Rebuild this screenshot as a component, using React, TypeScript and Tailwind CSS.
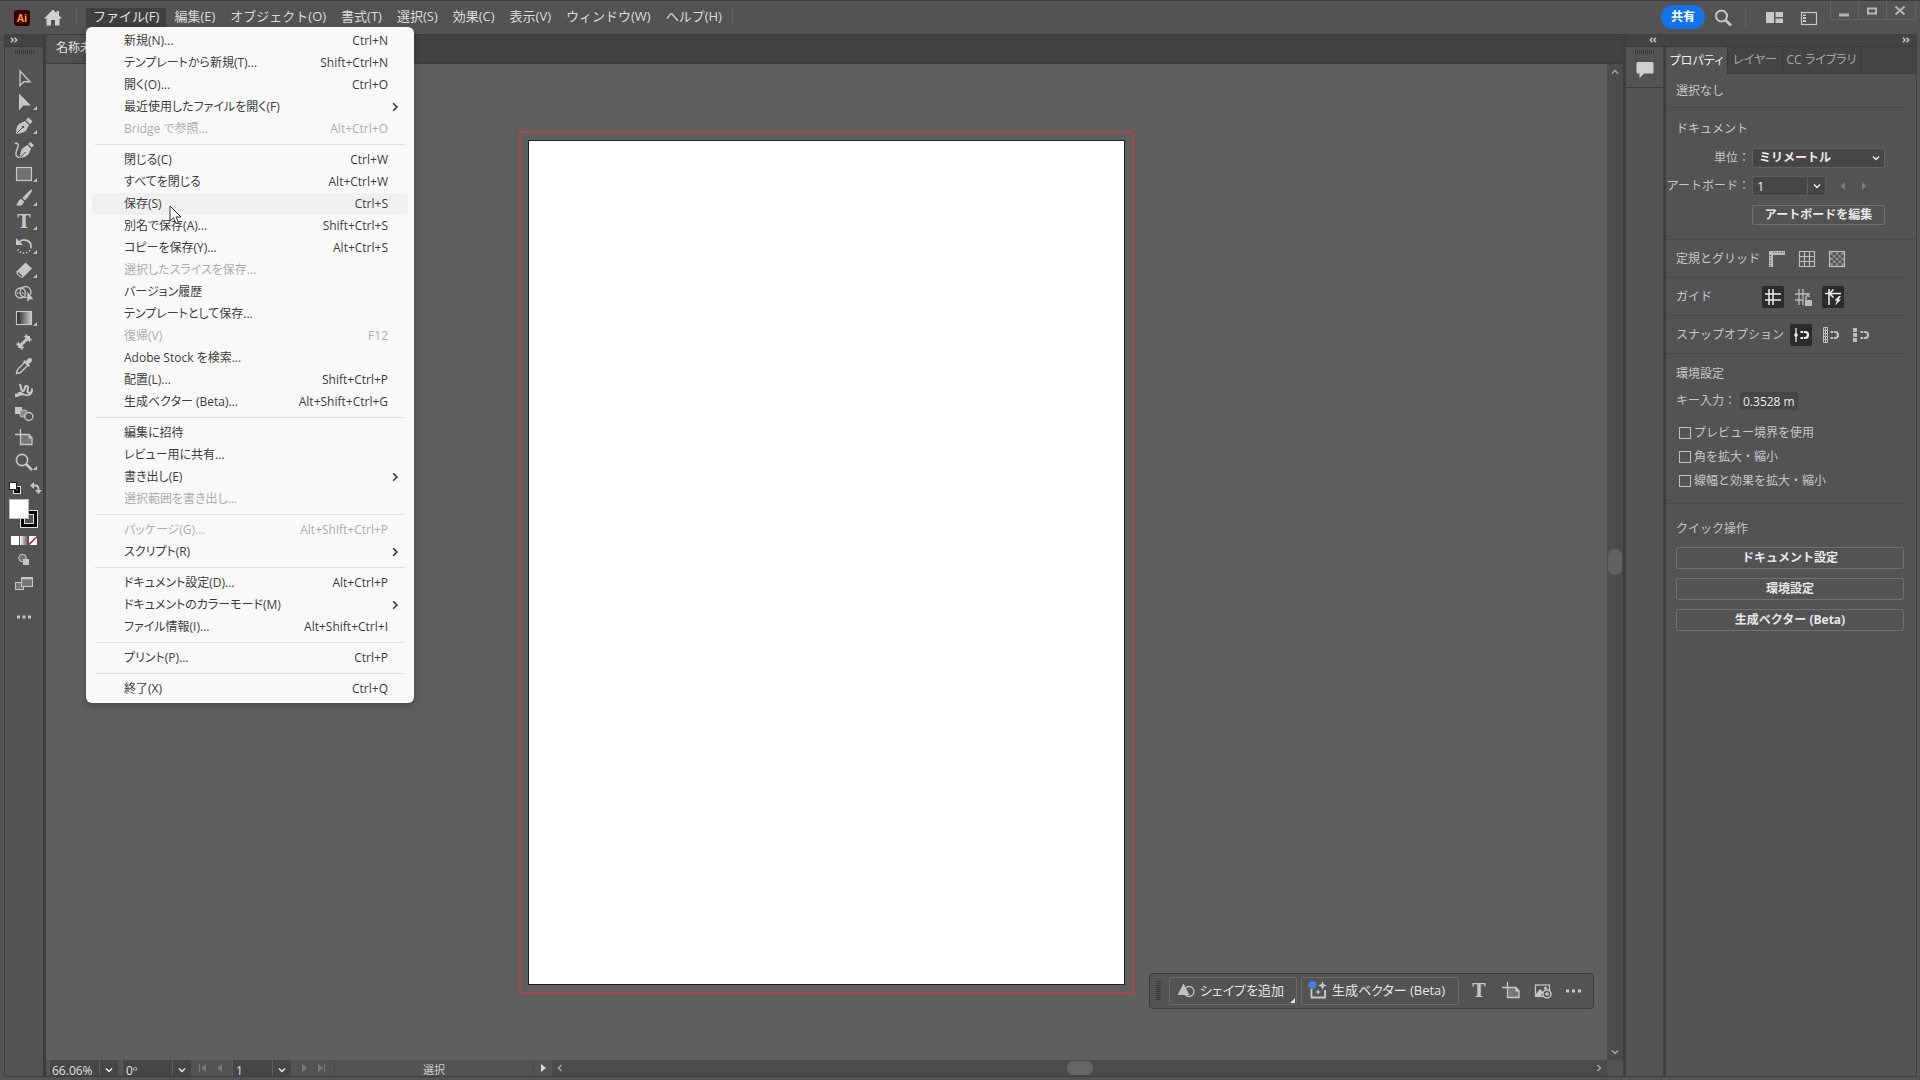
import { ReactNode, useState } from "react";

type MenuEntry = {
  label: string;
  shortcut?: string;
  disabled?: boolean;
  submenu?: boolean;
};

type Tool = {
  name: string;
  icon: ReactNode;
  more?: boolean;
};

const menus = [
  "ファイル(F)",
  "編集(E)",
  "オブジェクト(O)",
  "書式(T)",
  "選択(S)",
  "効果(C)",
  "表示(V)",
  "ウィンドウ(W)",
  "ヘルプ(H)",
];

const fileMenu: MenuEntry[][] = [
  [
    { label: "新規(N)...", shortcut: "Ctrl+N" },
    { label: "テンプレートから新規(T)...", shortcut: "Shift+Ctrl+N" },
    { label: "開く(O)...", shortcut: "Ctrl+O" },
    { label: "最近使用したファイルを開く(F)", submenu: true },
    { label: "Bridge で参照...", shortcut: "Alt+Ctrl+O", disabled: true },
  ],
  [
    { label: "閉じる(C)", shortcut: "Ctrl+W" },
    { label: "すべてを閉じる", shortcut: "Alt+Ctrl+W" },
    { label: "保存(S)", shortcut: "Ctrl+S" },
    { label: "別名で保存(A)...", shortcut: "Shift+Ctrl+S" },
    { label: "コピーを保存(Y)...", shortcut: "Alt+Ctrl+S" },
    { label: "選択したスライスを保存...", disabled: true },
    { label: "バージョン履歴" },
    { label: "テンプレートとして保存..." },
    { label: "復帰(V)", shortcut: "F12", disabled: true },
    { label: "Adobe Stock を検索..." },
    { label: "配置(L)...", shortcut: "Shift+Ctrl+P" },
    { label: "生成ベクター (Beta)...", shortcut: "Alt+Shift+Ctrl+G" },
  ],
  [
    { label: "編集に招待" },
    { label: "レビュー用に共有..." },
    { label: "書き出し(E)", submenu: true },
    { label: "選択範囲を書き出し...", disabled: true },
  ],
  [
    { label: "パッケージ(G)...", shortcut: "Alt+Shift+Ctrl+P", disabled: true },
    { label: "スクリプト(R)", submenu: true },
  ],
  [
    { label: "ドキュメント設定(D)...", shortcut: "Alt+Ctrl+P" },
    { label: "ドキュメントのカラーモード(M)", submenu: true },
    { label: "ファイル情報(I)...", shortcut: "Alt+Shift+Ctrl+I" },
  ],
  [{ label: "プリント(P)...", shortcut: "Ctrl+P" }],
  [{ label: "終了(X)", shortcut: "Ctrl+Q" }],
];

function Icon({ children, className = "size-5" }: { children: ReactNode; className?: string }) {
  return (
    <svg viewBox="0 0 20 20" className={className} fill="none" stroke="currentColor" strokeWidth="1.4" aria-hidden="true">
      {children}
    </svg>
  );
}

function Chevron({ dir, className = "size-2" }: { dir: "down" | "up" | "left" | "right"; className?: string }) {
  const paths = {
    down: "M1 2.5 L4 5.5 L7 2.5",
    up: "M1 5.5 L4 2.5 L7 5.5",
    left: "M5.5 1 L2.5 4 L5.5 7",
    right: "M2.5 1 L5.5 4 L2.5 7",
  };
  return (
    <svg viewBox="0 0 8 8" className={className} fill="none" stroke="currentColor" strokeWidth="1.4" aria-hidden="true">
      <path d={paths[dir]} />
    </svg>
  );
}

function DoubleChevron({ dir }: { dir: "left" | "right" }) {
  return (
    <svg viewBox="0 0 8 6" className="h-[6px] w-2 text-[#d0d0d0]" fill="none" stroke="currentColor" strokeWidth="1.3" aria-hidden="true">
      {dir === "right" ? (
        <path d="M1 .7 L3.2 3 L1 5.3 M4.6 .7 L6.8 3 L4.6 5.3" />
      ) : (
        <path d="M7 .7 L4.8 3 L7 5.3 M3.4 .7 L1.2 3 L3.4 5.3" />
      )}
    </svg>
  );
}

function Grip({ className }: { className: string }) {
  return <div className={`bg-[repeating-linear-gradient(90deg,#3a3a3a_0_1px,transparent_1px_2px)] ${className}`} />;
}

const artboardIcon = (
  <Icon>
    <path d="M7 7 H15 L18 10 V16.5 H7 Z" fill="#777" stroke="none" />
    <path d="M6.5 1 V16.5 H18 V10 L15 6.5 H1" strokeWidth="1.3" />
    <path d="M14.5 6.5 V10.5 H18.5 Z" fill="currentColor" stroke="none" />
  </Icon>
);

const typeIcon = <span className="font-['DejaVu_Serif',serif] text-lg leading-5 font-bold">T</span>;

const tools: Tool[] = [
  { name: "選択ツール", icon: <Icon><path d="M6 3 V17.5 L9.6 13.8 H16 Z" /></Icon> },
  {
    name: "ダイレクト選択ツール",
    more: true,
    icon: <Icon><path d="M5 1.5 V18.5 L9.3 13.6 H17 Z" fill="currentColor" stroke="none" /></Icon>,
  },
  {
    name: "ペンツール",
    more: true,
    icon: (
      <Icon>
        <path d="M2 18 C2 13 3 9.5 5 8 L11 5 L15 9 L12.5 14 C11 16 7 17.5 2 18 Z" fill="currentColor" stroke="none" />
        <path d="M11.8 4 L14.5 1.5 L18.5 5.5 L16 8.2 Z" fill="currentColor" stroke="none" />
        <path d="M2.5 17.5 L8.5 11.5" stroke="#535353" strokeWidth="1" />
        <circle cx="9" cy="11" r="1.2" fill="#535353" stroke="none" />
      </Icon>
    ),
  },
  {
    name: "曲線ツール",
    icon: (
      <Icon>
        <path d="M6 18 C6 13 7 9.5 9 8 L13.5 5 L17 8.5 L15 13.5 C13.5 16 10 17.5 6 18 Z" fill="currentColor" stroke="none" />
        <path d="M14.2 4 L16.5 2 L20 5.2 L17.8 7.6 Z" fill="currentColor" stroke="none" />
        <path d="M6.5 17.5 L11.5 12" stroke="#535353" strokeWidth="1" />
        <path d="M.8 3.5 C4.5 2.5 4.8 5 3.5 8 C1.5 12.5 .5 17 6 17.5" strokeWidth="1.5" />
      </Icon>
    ),
  },
  {
    name: "長方形ツール",
    more: true,
    icon: <Icon><rect x="2.5" y="3.5" width="15" height="13" fill="#707070" strokeWidth="1.2" /></Icon>,
  },
  {
    name: "ブラシツール",
    more: true,
    icon: (
      <Icon>
        <path d="M18 1.5 C19 2.5 14 9.5 10.8 12.5 L8.3 10 C11.5 6.5 17 .8 18 1.5 Z" fill="currentColor" stroke="none" />
        <path d="M7.5 11 L10 13.5 C9.5 17.5 5.5 18.5 2 17 C4.5 16 3.5 11.5 7.5 11 Z" fill="currentColor" stroke="none" />
      </Icon>
    ),
  },
  { name: "文字ツール", more: true, icon: typeIcon },
  {
    name: "回転ツール",
    more: true,
    icon: (
      <Icon>
        <path d="M5 6.5 C9 1.5 17.5 4.5 17 11" strokeWidth="1.8" />
        <path d="M17 11 C16.5 19 4 19 3.5 11.5" strokeDasharray="1.5 1.8" />
        <path d="M2 2 V9 H9 Z" fill="currentColor" stroke="none" />
      </Icon>
    ),
  },
  {
    name: "消しゴムツール",
    more: true,
    icon: (
      <Icon>
        <path d="M2.5 11.5 L11.5 2.5 L18 8.5 L9 17.5 H6.5 L2.5 13.8 Z" fill="currentColor" stroke="none" />
        <path d="M4.2 11.8 L8.8 16.2 L6.8 16.4 L3.8 13.6 Z" fill="#535353" stroke="none" />
      </Icon>
    ),
  },
  {
    name: "シェイプ形成ツール",
    icon: (
      <Icon>
        <circle cx="6.5" cy="9" r="5" strokeWidth="1.3" />
        <circle cx="11.5" cy="8" r="5.5" strokeWidth="1.3" />
        <path d="M3 9 H13" strokeDasharray="1.3 1.3" />
        <path d="M13 7 V18.5 L15.6 15.6 H20 Z" fill="currentColor" stroke="#535353" strokeWidth=".5" />
      </Icon>
    ),
  },
  {
    name: "グラデーションツール",
    more: true,
    icon: (
      <Icon>
        <defs>
          <linearGradient id="tool-gradient">
            <stop offset="0" stopColor="#222" />
            <stop offset="1" stopColor="#ccc" />
          </linearGradient>
        </defs>
        <rect x="2.5" y="3.5" width="15" height="13" fill="url(#tool-gradient)" strokeWidth="1.2" />
      </Icon>
    ),
  },
  {
    name: "ものさしツール",
    icon: (
      <Icon>
        <path d="M2.5 11.5 L8.5 17.5 M11.5 2.5 L17.5 8.5" strokeWidth="1.5" />
        <path d="M6 14 L14 6" strokeWidth="3" />
        <path d="M4 16 V9.5 L10.5 16 Z M16 4 V10.5 L9.5 4 Z" fill="currentColor" stroke="none" />
      </Icon>
    ),
  },
  {
    name: "スポイトツール",
    icon: (
      <Icon>
        <path d="M10.5 6.5 L3.5 13.5 L2.5 17.5 L6.5 16.5 L13.5 9.5" strokeWidth="1.4" />
        <path d="M9 5.5 L10.5 4 L12 5.5 C13 3 15.5 1 17.5 2.5 C19 4.5 17 7 14.5 8 L16 9.5 L14.5 11 Z" fill="currentColor" stroke="none" />
      </Icon>
    ),
  },
  {
    name: "パペットワープツール",
    icon: (
      <Icon>
        <path d="M5 4.5 C9 5.5 5 9.5 8.5 11 C11.5 12 9.5 5 13 6 C16 7.5 11 11.5 15 13 C17 13.5 18 11 18 8.5" strokeWidth="2" />
        <path d="M3 14.5 C5 9.5 8 12.5 11 14 C14 15.5 17 13.5 19 9.5 C19 15 15 17 11 15.8 C8 15 6 16 5 16 Z" fill="currentColor" stroke="none" />
        <rect x="1" y="13.5" width="3.5" height="3.5" fill="currentColor" stroke="none" />
      </Icon>
    ),
  },
  {
    name: "ブレンドツール",
    icon: (
      <Icon>
        <rect x="1" y="3" width="7" height="7" fill="currentColor" stroke="none" />
        <rect x="6" y="6" width="7" height="7" rx="2" fill="#8a8a8a" strokeWidth=".8" />
        <circle cx="14.8" cy="12.5" r="4" fill="#535353" />
      </Icon>
    ),
  },
  { name: "アートボードツール", icon: artboardIcon },
  {
    name: "ズームツール",
    more: true,
    icon: (
      <Icon>
        <circle cx="8" cy="8" r="5.6" strokeWidth="1.6" />
        <path d="M12 12 L18 18" strokeWidth="2.6" />
      </Icon>
    ),
  },
];

function FileMenu() {
  return (
    <div
      role="menu"
      className="absolute top-[26px] left-0 z-20 w-[328px] rounded-md bg-[#f9f9f9] py-[3px] font-['Open_Sans','Noto_Sans_CJK_JP',sans-serif] text-xs text-[#3c3c3c] shadow-[0_4px_8px_rgba(0,0,0,0.2)] [font-feature-settings:'palt']"
    >
      {fileMenu.map((group, i) => (
        <div key={i}>
          {i > 0 && <hr className="mx-[9px] my-1 border-[#dedede]" />}
          {group.map((entry) => (
            <button
              key={entry.label}
              role="menuitem"
              disabled={entry.disabled}
              className={`mx-[6px] flex h-[22px] w-[316px] items-center rounded-sm pl-8 text-left disabled:text-[#adadad] ${
                entry.label === "保存(S)" ? "bg-[#f0f0f0]" : ""
              }`}
            >
              <span className="flex-1">{entry.label}</span>
              {entry.shortcut && <span className="pr-5">{entry.shortcut}</span>}
              {entry.submenu && <Chevron dir="right" className="mr-2 size-[10px]" />}
            </button>
          ))}
        </div>
      ))}
      <svg viewBox="0 0 14 20" className="absolute top-[178px] left-[83px] h-5 w-[14px]" aria-hidden="true">
        <path d="M1 1 V16 L4.5 12.8 L7 18.5 L9.5 17.5 L7 12 H12 Z" fill="#fff" stroke="#333" strokeWidth="1" />
      </svg>
    </div>
  );
}

function TopBar() {
  return (
    <header className="flex h-[33px] shrink-0 items-start">
      <div className="mt-[9px] ml-[14px] flex size-4 items-center justify-center rounded-[3px] bg-[#300] font-['Open_Sans',sans-serif] text-[10px] leading-none font-bold text-[#ff9a3c]">
        Ai
      </div>
      <button aria-label="ホーム" className="mt-[7px] ml-[13px] text-[#d0d0d0]">
        <Icon>
          <path d="M10 1.5 L1 10.5 H3.5 V17.5 H8 V12 H12 V17.5 H16.5 V10.5 H19 L16 7.5 V3 H13.5 V5 Z" fill="currentColor" stroke="none" />
        </Icon>
      </button>
      <div className="mt-[7px] ml-[13px] h-[18px] w-px bg-[#626262]" />
      <nav className="relative ml-[9px] flex gap-px">
        {menus.map((menu, i) => (
          <button
            key={menu}
            className={`mt-[7px] h-[19px] px-[7px] pb-1 text-[13px] leading-4 whitespace-nowrap ${
              i === 0 ? "bg-[#3f3f3f] text-[#e6e6e6]" : "text-[#dcdcdc]"
            }`}
          >
            {menu}
          </button>
        ))}
        <FileMenu />
      </nav>
      <div className="mt-[7px] ml-[3px] h-[18px] w-px bg-[#626262]" />
      <button className="mt-1 ml-auto h-6 w-11 rounded-full bg-[#1473e6] text-xs font-bold text-white">共有</button>
      <button aria-label="検索" className="mt-[7px] ml-2 text-[#c8c8c8]">
        <Icon>
          <circle cx="8.5" cy="8" r="5.5" strokeWidth="2" />
          <path d="M12.5 12 L18 17.5" strokeWidth="2.6" />
        </Icon>
      </button>
      <div className="mt-[7px] ml-3 h-5 w-px bg-[#626262]" />
      <button aria-label="ドキュメントの配置" className="mt-[7px] ml-[19px] text-[#c8c8c8]">
        <Icon>
          <path d="M1 4 H9 V15 H1 Z M10.5 4 H18 V9 H10.5 Z M10.5 10.5 H18 V15 H10.5 Z" fill="currentColor" stroke="none" />
        </Icon>
      </button>
      <button aria-label="ワークスペースの切り替え" className="mt-[7px] ml-[15px] text-[#c8c8c8]">
        <Icon>
          <rect x="1.5" y="4.5" width="15" height="12" strokeWidth="1.2" />
          <path d="M3 6.5 H6 V8 H3 Z M3 9 H6 V11 H3 Z M3 12 H6 V14 H3 Z" fill="currentColor" stroke="none" />
        </Icon>
      </button>
      <div className="mr-1 ml-[10px] flex h-[19px] divide-x divide-[#646464] border-x border-b border-[#646464] text-[#b4b4b4]">
        <button aria-label="最小化" className="w-7 pt-px pl-1">
          <Icon><path d="M4 13 H14" strokeWidth="3" /></Icon>
        </button>
        <button aria-label="最大化" className="w-7 pl-1">
          <Icon><rect x="5" y="7.5" width="8" height="5" strokeWidth="2" /></Icon>
        </button>
        <button aria-label="閉じる" className="w-7 pl-1">
          <Icon><path d="M4.5 5.5 L13.5 13.5 M13.5 5.5 L4.5 13.5" strokeWidth="2" /></Icon>
        </button>
      </div>
    </header>
  );
}

function Toolbar() {
  return (
    <aside className="flex w-[42px] shrink-0 flex-col items-center border-r-3 border-b border-l border-[#3e3e3e] text-[#c6c6c6]">
      <div className="flex h-[13px] w-full items-center border-b border-[#3a3a3a] bg-[#434343] pl-[5px]">
        <DoubleChevron dir="right" />
      </div>
      <Grip className="mt-[3px] mb-3 h-1 w-[19px]" />
      {tools.map((tool) => (
        <button key={tool.name} aria-label={tool.name} className="relative flex h-6 w-full items-center justify-center">
          {tool.icon}
          {tool.more && (
            <svg viewBox="0 0 4 4" className="absolute right-[6px] bottom-1 size-1" aria-hidden="true">
              <path d="M4 0 V4 H0 Z" fill="currentColor" />
            </svg>
          )}
        </button>
      ))}
      <div className="mt-2 flex w-full gap-[9px] pl-1">
        <button aria-label="初期設定の塗りと線">
          <svg viewBox="0 0 12 12" className="size-3" aria-hidden="true">
            <rect x="4.5" y="4.5" width="7" height="7" fill="none" stroke="#e0e0e0" />
            <rect x="6" y="6" width="4" height="4" fill="#535353" stroke="#000" strokeWidth="2" />
            <rect x=".5" y=".5" width="7" height="7" fill="#fff" stroke="#222" />
          </svg>
        </button>
        <button aria-label="塗りと線を入れ替え">
          <svg viewBox="0 0 12 12" className="size-3" fill="none" stroke="currentColor" aria-hidden="true">
            <path d="M3 3.5 H5.5 Q8.5 3.5 8.5 8" strokeWidth="1.8" />
            <path d="M0 3.5 L4 0 V7 Z M8.5 12 L5 8 H12 Z" fill="currentColor" stroke="none" />
          </svg>
        </button>
      </div>
      <div className="mt-[5px] w-full pl-1">
        <svg viewBox="0 0 30 30" className="size-[30px]" aria-hidden="true">
          <rect x="11.5" y="11.5" width="17" height="17" fill="#000" stroke="#e0e0e0" />
          <rect x="15.5" y="15.5" width="9" height="9" fill="#535353" stroke="#e0e0e0" />
          <rect x=".5" y=".5" width="19" height="19" fill="#fff" stroke="#bbb" />
        </svg>
      </div>
      <div className="mt-[7px] flex w-full gap-px pl-[6px]">
        <button aria-label="カラー" className="h-[9px] w-2 bg-white" />
        <button aria-label="グラデーション" className="h-[9px] w-2 bg-linear-to-r from-white to-[#555]" />
        <button aria-label="なし" className="h-[9px] w-2 bg-[linear-gradient(135deg,#fff_42%,#c22_42%_58%,#fff_58%)]" />
      </div>
      <button aria-label="描画方法" className="mt-[5px]">
        <Icon>
          <circle cx="8.5" cy="8" r="3.8" fill="#777" strokeWidth="1" />
          <rect x="9" y="9" width="6" height="6" fill="currentColor" stroke="none" />
        </Icon>
      </button>
      <button aria-label="スクリーンモード" className="mt-1">
        <Icon>
          <rect x="1.5" y="8.5" width="8" height="7" fill="#777" strokeWidth="1" />
          <rect x="7.5" y="3.5" width="11" height="9" fill="#777" strokeWidth="1" />
          <path d="M7.5 4.5 H18.5" strokeWidth="1.6" />
        </Icon>
      </button>
      <button aria-label="ツールバーを編集" className="mt-[13px]">
        <Icon>
          <path d="M3 10 H6 M8.5 10 H11.5 M14 10 H17" strokeWidth="3" />
        </Icon>
      </button>
    </aside>
  );
}

function ContextBar() {
  return (
    <div className="absolute right-[13px] bottom-[51px] flex h-9 items-center rounded-sm border border-[#3c3c3c] bg-[#535353] pr-2 pl-[6px] text-[13px] text-[#e4e4e4] [font-feature-settings:'palt']">
      <div className="mr-2 h-5 w-[5px] bg-[repeating-linear-gradient(180deg,#3a3a3a_0_1px,transparent_1px_2px)]" />
      <button className="relative mr-1 flex h-7 w-32 items-center rounded-xs border border-[#6c6c6c] pl-[6px] whitespace-nowrap">
        <Icon className="mr-1 size-5 text-[#c0c0c0]">
          <circle cx="13" cy="10.5" r="5" strokeWidth="1.3" />
          <path d="M7.5 2.5 L13.5 14 H1.5 Z" fill="currentColor" stroke="none" />
        </Icon>
        シェイプを追加
        <svg viewBox="0 0 5 5" className="absolute right-px bottom-px size-[5px]" aria-hidden="true">
          <path d="M5 0 V5 H0 Z" fill="currentColor" />
        </svg>
      </button>
      <button className="mr-[10px] flex h-7 w-[158px] items-center rounded-xs border border-[#6c6c6c] pl-[6px] whitespace-nowrap">
        <Icon className="mr-1 size-5 text-[#c8c8c8]">
          <path d="M3.5 8 V16.5 H17 V9" strokeWidth="1.8" />
          <path d="M14.5 0 L15.7 3.3 L19 4.5 L15.7 5.7 L14.5 9 L13.3 5.7 L10 4.5 L13.3 3.3 Z" fill="currentColor" stroke="none" />
          <path d="M10 8 L10.8 10.2 L13 11 L10.8 11.8 L10 14 L9.2 11.8 L7 11 L9.2 10.2 Z" fill="currentColor" stroke="none" />
          <circle cx="4.5" cy="4" r="4" fill="#3b82d8" stroke="none" />
        </Icon>
        生成ベクター (Beta)
      </button>
      <div className="flex gap-3 text-[#c8c8c8]">
        <button aria-label="文字" className="flex w-5 justify-center">{typeIcon}</button>
        <button aria-label="アートボード">{artboardIcon}</button>
        <button aria-label="画像を配置">
          <Icon>
            <rect x="2.5" y="4" width="14" height="11.5" strokeWidth="1.2" />
            <path d="M3 13 L7 8 L10 11 L8 15 H3 Z" fill="currentColor" stroke="none" />
            <circle cx="12.5" cy="7" r="1.5" fill="currentColor" stroke="none" />
            <circle cx="14" cy="13" r="4" fill="#535353" strokeWidth="1.5" />
            <path d="M14 11 V15 M12 13 H16" />
          </Icon>
        </button>
        <button aria-label="その他">
          <Icon><path d="M1 10 H4 M7 10 H10 M13 10 H16" strokeWidth="3" /></Icon>
        </button>
      </div>
    </div>
  );
}

function StatusBar() {
  const field = "h-4 shrink-0 bg-[#464646] border-x border-[#5c5c5c] pt-[6px] text-xs leading-4 text-[#e0e0e0] font-['Open_Sans',sans-serif] outline-none";
  const drop = "flex h-4 w-[18px] shrink-0 items-center justify-center bg-[#464646] pt-1 text-[#f0f0f0]";
  return (
    <footer className="flex h-4 shrink-0 items-center overflow-hidden bg-[#535353] pl-[3px]">
      <input aria-label="ズーム" defaultValue="66.06%" className={`${field} w-[51px] px-[2px]`} />
      <button aria-label="ズームの一覧" className={drop}><Chevron dir="down" /></button>
      <input aria-label="回転" defaultValue="0º" className={`${field} ml-1 w-[51px] px-[3px]`} />
      <button aria-label="回転の一覧" className={drop}><Chevron dir="down" /></button>
      <div className="flex w-[41px] justify-around px-1 text-[#7a7a7a]">
        <button aria-label="最初"><svg viewBox="0 0 8 8" className="size-2"><path d="M0 0 H1 V8 H0 Z M7 0 V8 L2 4 Z" fill="currentColor" /></svg></button>
        <button aria-label="前へ"><svg viewBox="0 0 8 8" className="size-2"><path d="M6 0 V8 L1 4 Z" fill="currentColor" /></svg></button>
      </div>
      <input aria-label="アートボードの番号" defaultValue="1" className={`${field} w-[41px] px-[3px]`} />
      <button aria-label="アートボードの一覧" className={drop}><Chevron dir="down" /></button>
      <div className="flex w-[43px] justify-around px-1 text-[#7a7a7a]">
        <button aria-label="次へ"><svg viewBox="0 0 8 8" className="size-2"><path d="M2 0 V8 L7 4 Z" fill="currentColor" /></svg></button>
        <button aria-label="最後"><svg viewBox="0 0 8 8" className="size-2"><path d="M7 0 H8 V8 H7 Z M1 0 V8 L6 4 Z" fill="currentColor" /></svg></button>
      </div>
      <div className="h-4 w-[200px] border-x border-[#484848] pt-[2px] text-center text-[11px] leading-4 text-[#d0d0d0]">選択</div>
      <button aria-label="ステータスの表示" className="flex w-[18px] justify-center text-[#d8d8d8]">
        <svg viewBox="0 0 8 10" className="h-[10px] w-2"><path d="M2 1 V9 L7 5 Z" fill="currentColor" /></svg>
      </button>
      <div className="flex h-4 flex-1 items-center bg-[#4b4b4b] px-1 text-[#a8a8a8]">
        <Chevron dir="left" />
        <div className="flex flex-1 justify-center">
          <div className="h-[14px] w-[26px] rounded-full bg-[#666]" />
        </div>
        <Chevron dir="right" />
      </div>
      <div className="w-4" />
    </footer>
  );
}

function DocumentArea() {
  return (
    <main className="flex min-w-0 flex-1 flex-col border-b border-[#3c3c3c]">
      <div className="flex h-[30px] shrink-0 border-y border-[#3a3a3a] bg-[#424242]">
        <div className="w-[350px] bg-[#505050] pl-[10px] text-xs leading-[26px] text-[#e6e6e6]">名称未設定-1</div>
      </div>
      <div className="flex min-h-0 flex-1">
        <div className="relative flex flex-1 items-center justify-center bg-[#5f5f5f]">
          <div className="border-2 border-[#a34a4a] p-[7px]">
            <div className="h-[845px] w-[597px] border border-[#222] bg-white" />
          </div>
          <ContextBar />
        </div>
        <div className="flex w-4 flex-col items-center justify-between bg-[#4b4b4b] py-1 text-[#a8a8a8]">
          <Chevron dir="up" />
          <div className="h-[26px] w-[14px] rounded-full bg-[#626262]" />
          <Chevron dir="down" />
        </div>
      </div>
      <StatusBar />
    </main>
  );
}

function PanelButton({ children, className }: { children: ReactNode; className: string }) {
  return (
    <button className={`rounded-xs border border-[#707070] text-xs font-bold text-[#e8e8e8] ${className}`}>
      {children}
    </button>
  );
}

function IconToggle({ name, active, children }: { name: string; active?: boolean; children: ReactNode }) {
  return (
    <button
      aria-label={name}
      className={`flex size-[22px] items-center justify-center rounded-xs ${active ? "bg-[#2b2b2b] text-[#f0f0f0]" : "text-[#bdbdbd]"}`}
    >
      {children}
    </button>
  );
}

const magnet = <path d="M9.5 7 H14 A3 3 0 0 1 14 13 H9.5" strokeWidth="2.2" strokeDasharray="2.5 .8 11.5 .8 4" />;

function PropertiesPanel() {
  const [checks, setChecks] = useState([false, false, false]);
  const labels = ["プレビュー境界を使用", "角を拡大・縮小", "線幅と効果を拡大・縮小"];

  return (
    <section className="flex w-[250px] flex-col text-xs text-[#c6c6c6]">
      <div className="flex h-[27px] border-b border-[#3c3c3c] bg-[#444] [font-feature-settings:'palt']">
        <button className="-mb-px w-[61px] bg-[#535353] text-[#f0f0f0]">プロパティ</button>
        <button className="w-[56px] border-x border-[#3a3a3a] text-[#a8a8a8]">レイヤー</button>
        <button className="w-[78px] border-r border-[#3a3a3a] text-[#a8a8a8]">CC ライブラリ</button>
      </div>

      <h2 className="mr-3 h-[34px] border-b border-[#494949] pl-[10px] leading-[34px]">選択なし</h2>

      <div className="border-b border-[#494949] pb-[14px]">
        <h3 className="mt-3 mb-[10px] pl-[10px] leading-[18px]">ドキュメント</h3>
        <div className="flex h-5 items-center">
          <label htmlFor="unit" className="w-[86px] pr-[2px] text-right">単位：</label>
          <div className="relative">
            <select id="unit" className="h-5 w-[133px] appearance-none rounded-xs border border-[#626262] bg-[#464646] pl-[6px] font-bold text-[#ececec]">
              <option>ミリメートル</option>
            </select>
            <Chevron dir="down" className="pointer-events-none absolute top-[6px] right-[5px] size-2 text-[#f0f0f0]" />
          </div>
        </div>
        <div className="mt-2 flex h-5 items-center">
          <label htmlFor="artboard" className="w-[86px] pr-[2px] text-right whitespace-nowrap">アートボード：</label>
          <input id="artboard" defaultValue="1" className="h-5 w-14 rounded-l-xs border border-[#5e5e5e] bg-[#464646] pl-1 text-[13px] text-[#ececec]" />
          <button aria-label="アートボードを選択" className="flex h-5 w-[18px] items-center justify-center rounded-r-xs border border-l-0 border-[#5e5e5e] bg-[#464646] text-[#f0f0f0]">
            <Chevron dir="down" />
          </button>
          <button aria-label="前のアートボード" className="ml-[13px] text-[#7a7a7a]">
            <svg viewBox="0 0 8 8" className="size-2"><path d="M6 0 V8 L1.5 4 Z" fill="currentColor" /></svg>
          </button>
          <button aria-label="次のアートボード" className="ml-[13px] text-[#7a7a7a]">
            <svg viewBox="0 0 8 8" className="size-2"><path d="M2 0 V8 L6.5 4 Z" fill="currentColor" /></svg>
          </button>
        </div>
        <PanelButton className="mt-[9px] ml-[86px] h-5 w-[133px] leading-4">アートボードを編集</PanelButton>
      </div>

      <div className="mr-3 flex h-[38px] items-center border-b border-[#494949] pl-[10px]">
        <span className="w-[90px]">定規とグリッド</span>
        <div className="flex gap-2">
          <IconToggle name="定規">
            <Icon>
              <path d="M2 2 H18 V6 H6 V18 H2 Z" fill="currentColor" stroke="none" />
              <path d="M6 3.5 H18 M3.5 6 V18" stroke="#535353" strokeDasharray="1 1.5" strokeWidth="1.2" />
            </Icon>
          </IconToggle>
          <IconToggle name="グリッド">
            <Icon><path d="M2.5 2.5 H17.5 V17.5 H2.5 Z M7.5 2.5 V17.5 M12.5 2.5 V17.5 M2.5 7.5 H17.5 M2.5 12.5 H17.5" strokeWidth="1.2" /></Icon>
          </IconToggle>
          <IconToggle name="透明グリッド">
            <Icon>
              <rect x="2.5" y="2.5" width="15" height="15" strokeWidth="1.2" />
              <path d="M3 4.5 H17 M3 10 H17 M3 15.5 H17" strokeDasharray="2.8 2.8" strokeWidth="2.6" opacity=".6" />
              <path d="M5.8 7.25 H17 M5.8 12.75 H17" strokeDasharray="2.8 2.8" strokeWidth="2.6" opacity=".6" />
            </Icon>
          </IconToggle>
        </div>
      </div>

      <div className="mr-3 flex h-[38px] items-center border-b border-[#494949] pl-[10px]">
        <span className="w-[86px]">ガイド</span>
        <div className="flex gap-2">
          <IconToggle name="ガイドを表示" active>
            <Icon><path d="M6 2 V18 M10 2 V18 M2 7 H18 M2 13 H18" strokeWidth="1.5" /></Icon>
          </IconToggle>
          <IconToggle name="ガイドをロック">
            <Icon>
              <path d="M6 2 V18 M10 2 V18 M2 7 H17 M2 13 H10" strokeWidth="1.3" />
              <rect x="12" y="13" width="7" height="6" fill="currentColor" stroke="none" />
              <path d="M13 13 V11 A1.8 1.8 0 0 1 16.5 10" />
            </Icon>
          </IconToggle>
          <IconToggle name="スマートガイド" active>
            <Icon>
              <path d="M6 2 V18 M2 6.5 H18 M10.5 2.5 L6.5 6.5 L10.5 10.5" strokeWidth="1.5" />
              <path d="M16 9 L11.5 13.5 H14 L12 18.5 L18 12.5 H15.5 L18 9 Z" fill="currentColor" stroke="none" />
            </Icon>
          </IconToggle>
        </div>
      </div>

      <div className="mr-3 flex h-[38px] items-center border-b border-[#494949] pl-[10px]">
        <span className="w-[114px]">スナップオプション</span>
        <div className="flex gap-2">
          <IconToggle name="ポイントにスナップ" active>
            <Icon>
              <path d="M5 3 V17" strokeWidth="1.3" />
              <circle cx="5" cy="10" r="1.8" fill="currentColor" stroke="none" />
              {magnet}
            </Icon>
          </IconToggle>
          <IconToggle name="グリッドにスナップ">
            <Icon>
              <path d="M2.5 2.5 H6.5 V17.5 H2.5 Z M4.5 2.5 V17.5 M2.5 5.5 H6.5 M2.5 8.5 H6.5 M2.5 11.5 H6.5 M2.5 14.5 H6.5" strokeWidth="1" />
              {magnet}
            </Icon>
          </IconToggle>
          <IconToggle name="ピクセルにスナップ">
            <Icon>
              <path d="M2 3 H6 V7 H2 Z M2 8 H6 V12 H2 Z M2 13 H6 V17 H2 Z" fill="currentColor" stroke="none" />
              {magnet}
            </Icon>
          </IconToggle>
        </div>
      </div>

      <div className="mr-3 border-b border-[#494949] pb-[10px] pl-[10px]">
        <h3 className="mt-[11px] mb-2 leading-[18px]">環境設定</h3>
        <div className="flex h-5 items-center">
          <label htmlFor="key-input" className="w-16 leading-5">キー入力：</label>
          <input id="key-input" defaultValue="0.3528 mm" className="h-[18px] w-[58px] rounded-xs border-x-3 border-[#464646] bg-[#464646] font-['Open_Sans',sans-serif] text-xs text-[#ececec]" />
        </div>
        <div className="mt-[10px]">
          {labels.map((label, i) => (
            <label key={label} className="flex h-6 items-center gap-[3px] pl-[3px]">
              <input
                type="checkbox"
                checked={checks[i]}
                onChange={() => setChecks(checks.map((c, j) => (j === i ? !c : c)))}
                className="size-3 appearance-none border border-[#c0c0c0] checked:bg-[#c0c0c0]"
              />
              {label}
            </label>
          ))}
        </div>
      </div>

      <div className="mr-3 pl-[10px]">
        <h3 className="mt-4 mb-[9px] leading-[18px]">クイック操作</h3>
        <div className="flex flex-col gap-[9px]">
          <PanelButton className="h-[22px]">ドキュメント設定</PanelButton>
          <PanelButton className="h-[22px]">環境設定</PanelButton>
          <PanelButton className="h-[22px]">生成ベクター (Beta)</PanelButton>
        </div>
      </div>
    </section>
  );
}

function RightDock() {
  return (
    <div className="flex w-[294px] shrink-0 flex-col border-r border-b border-l-3 border-[#3e3e3e]">
      <div className="flex h-[13px] shrink-0 items-center border-b border-[#3a3a3a] bg-[#434343] pr-[6px] pl-[23px]">
        <DoubleChevron dir="left" />
        <div className="flex-1" />
        <DoubleChevron dir="right" />
      </div>
      <div className="flex flex-1">
        <div className="w-10 border-r-3 border-[#3e3e3e]">
          <div className="flex h-[41px] flex-col items-center border-b border-[#3a3a3a] pt-[3px] text-[#d0d0d0]">
            <Grip className="h-1 w-[19px]" />
            <button aria-label="コメント" className="mt-[6px]">
              <Icon><path d="M3 2 H17 Q18.5 2 18.5 3.5 V12 Q18.5 13.5 17 13.5 H9 L4.5 18 V13.5 H3 Q1.5 13.5 1.5 12 V3.5 Q1.5 2 3 2 Z" fill="currentColor" stroke="none" /></Icon>
            </button>
          </div>
        </div>
        <PropertiesPanel />
      </div>
    </div>
  );
}

export default function App() {
  return (
    <div className="flex h-screen flex-col overflow-hidden border-t border-[#3b3b3b] bg-[#535353] font-['Open_Sans','Noto_Sans_CJK_JP',sans-serif]">
      <TopBar />
      <div className="flex min-h-0 flex-1 pr-[3px] pb-[3px] pl-1">
        <Toolbar />
        <DocumentArea />
        <RightDock />
      </div>
    </div>
  );
}
